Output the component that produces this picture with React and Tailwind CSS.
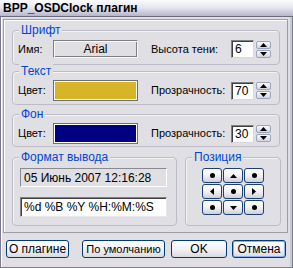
const font = { fontFamily: '"Liberation Sans", Arial, sans-serif' };

function Group({ title, className, children }) {
  return (
    <div className={`relative border border-[#bdbcc6] rounded-[4px] shadow-[inset_1px_1px_0_#f4f4f7] ${className}`}>
      <span className="absolute left-[6px] -top-[8px] bg-[#e0dfe3] px-[2px] text-[12px] leading-[14px] text-[#0046d5]">
        {title}
      </span>
      {children}
    </div>
  );
}

function Spinner({ value }) {
  return (
    <div className="flex items-center">
      <div className="w-[23px] h-[18px] bg-white border border-[#7f7f88] border-r-[#d8d8de] border-b-[#d8d8de] shadow-[inset_1px_1px_0_#404040] flex items-center pl-[3px] text-[12px] text-black">
        {value}
      </div>
      <div className="ml-[2px] flex flex-col gap-px">
        <SpinBtn up />
        <SpinBtn />
      </div>
    </div>
  );
}

function SpinBtn({ up }) {
  return (
    <div className="w-[15px] h-[8px] rounded-[2px] border border-[#9ca4bc] bg-gradient-to-b from-[#fbfbfd] to-[#d4d4de] flex items-center justify-center">
      <svg width="7" height="4" viewBox="0 0 7 4">
        {up ? <path d="M0 4 L3.5 0 L7 4 Z" fill="#000" /> : <path d="M0 0 L3.5 4 L7 0 Z" fill="#000" />}
      </svg>
    </div>
  );
}

function Dot() {
  return <div className="w-[5px] h-[5px] rounded-full bg-black" />;
}

function PosBtn({ kind }) {
  let icon = <Dot />;
  if (kind === 'up') icon = <svg width="7" height="4"><path d="M0 4 L3.5 0 L7 4 Z" fill="#000" /></svg>;
  if (kind === 'down') icon = <svg width="7" height="4"><path d="M0 0 L3.5 4 L7 0 Z" fill="#000" /></svg>;
  if (kind === 'left') icon = <svg width="4" height="7"><path d="M4 0 L0 3.5 L4 7 Z" fill="#000" /></svg>;
  if (kind === 'right') icon = <svg width="4" height="7"><path d="M0 0 L4 3.5 L0 7 Z" fill="#000" /></svg>;
  return (
    <div className="w-[20px] h-[15px] rounded-[3px] border border-[#1c3f78] bg-gradient-to-b from-white via-[#f1f1f5] to-[#cfcfdc] flex items-center justify-center">
      {icon}
    </div>
  );
}

function Button({ children, w, focus }) {
  return (
    <div
      className={`${w} h-[18px] rounded-[3px] border border-[#003c74] bg-gradient-to-b from-white via-[#f3f3f6] to-[#d9d9e2] flex items-center justify-center whitespace-nowrap text-[12px] text-black ${focus ? 'shadow-[inset_0_0_0_1px_#8fb2ea]' : ''}`}
    >
      {children}
    </div>
  );
}

export default function App() {
  return (
    <div style={font} className="w-[293px] h-[268px] bg-[#e0dfe3] flex flex-col overflow-hidden text-[11px] text-black">
      <div className="h-[17px] shrink-0 bg-gradient-to-b from-[#fcfcfe] via-[#e4e4ee] to-[#b6b6ca] border-b border-[#6c6c80] flex items-center pl-[3px]">
        <span className="text-[12px] font-bold leading-none">BPP_OSDClock плагин</span>
      </div>
      <div className="flex-1 border-x border-b border-[#7c7c90] shadow-[inset_-2px_0_0_#c9c9d3,inset_1px_0_0_#fff]">
        <div className="ml-[2px] mt-[2px] w-[285px] h-[214px] border border-[#9c9ca6] shadow-[inset_1px_1px_0_#fff] flex flex-col pl-[8px]">
          <Group title="Шрифт" className="mt-[10px] w-[268px] h-[35px]">
            <div className="flex items-center h-[18px] mt-[9px] pl-[5px]">
              <span className="w-[35px]">Имя:</span>
              <div className="w-[85px] h-[18px] border border-[#808080] border-r-[#f8f8f8] border-b-[#f8f8f8] shadow-[inset_1px_1px_0_#f8f8f8,inset_-1px_-1px_0_#808080] flex items-center justify-center text-[12px]">
                Arial
              </div>
              <span className="ml-[13px] w-[80px]">Высота тени:</span>
              <Spinner value="6" />
            </div>
          </Group>
          <Group title="Текст" className="mt-[6px] w-[268px] h-[34px]">
            <div className="flex items-center h-[21px] mt-[8px] pl-[5px]">
              <span className="w-[35px]">Цвет:</span>
              <div className="w-[85px] h-[21px] border border-[#707070] shadow-[inset_1px_1px_0_#fff,inset_-1px_-1px_0_#fff] bg-[#d8b428]" />
              <span className="ml-[13px] w-[80px]">Прозрачность:</span>
              <Spinner value="70" />
            </div>
          </Group>
          <Group title="Фон" className="mt-[9px] w-[268px] h-[33px]">
            <div className="flex items-center h-[21px] mt-[8px] pl-[5px]">
              <span className="w-[35px]">Цвет:</span>
              <div className="w-[85px] h-[21px] border border-[#707070] shadow-[inset_1px_1px_0_#fff,inset_-1px_-1px_0_#fff] bg-[#000080]" />
              <span className="ml-[13px] w-[80px]">Прозрачность:</span>
              <Spinner value="30" />
            </div>
          </Group>
          <div className="mt-[10px] flex gap-[8px]">
            <Group title="Формат вывода" className="w-[165px] h-[69px]">
              <div className="ml-[7px] mt-[10px] w-[147px] h-[19px] border border-[#8a8a92] border-r-[#fff] border-b-[#fff] bg-[#e0dfe3] flex items-center pl-[3px] text-[12px]">
                05 Июнь 2007 12:16:28
              </div>
              <div className="ml-[7px] mt-[10px] w-[147px] h-[20px] border border-[#7f7f88] border-r-[#e8e8ec] border-b-[#e8e8ec] shadow-[inset_1px_1px_0_#404040] bg-white flex items-center pl-[3px] text-[12px]">
                %d %B %Y %H:%M:%S
              </div>
            </Group>
            <Group title="Позиция" className="w-[96px] h-[69px]">
              <div className="ml-[16px] mt-[10px] grid grid-cols-3 gap-px w-[62px]">
                <PosBtn />
                <PosBtn kind="up" />
                <PosBtn />
                <PosBtn kind="left" />
                <PosBtn />
                <PosBtn kind="right" />
                <PosBtn />
                <PosBtn kind="down" />
                <PosBtn />
              </div>
            </Group>
          </div>
        </div>
        <div className="mt-[7px] ml-[5px] flex">
          <Button w="w-[63px]">О плагине</Button>
          <div className="ml-[13px]"><Button w="w-[83px]"><span className="text-[11px]">По умолчанию</span></Button></div>
          <div className="ml-[6px]"><Button w="w-[56px]">OK</Button></div>
          <div className="ml-[5px]"><Button w="w-[54px]" focus>Отмена</Button></div>
        </div>
      </div>
    </div>
  );
}
